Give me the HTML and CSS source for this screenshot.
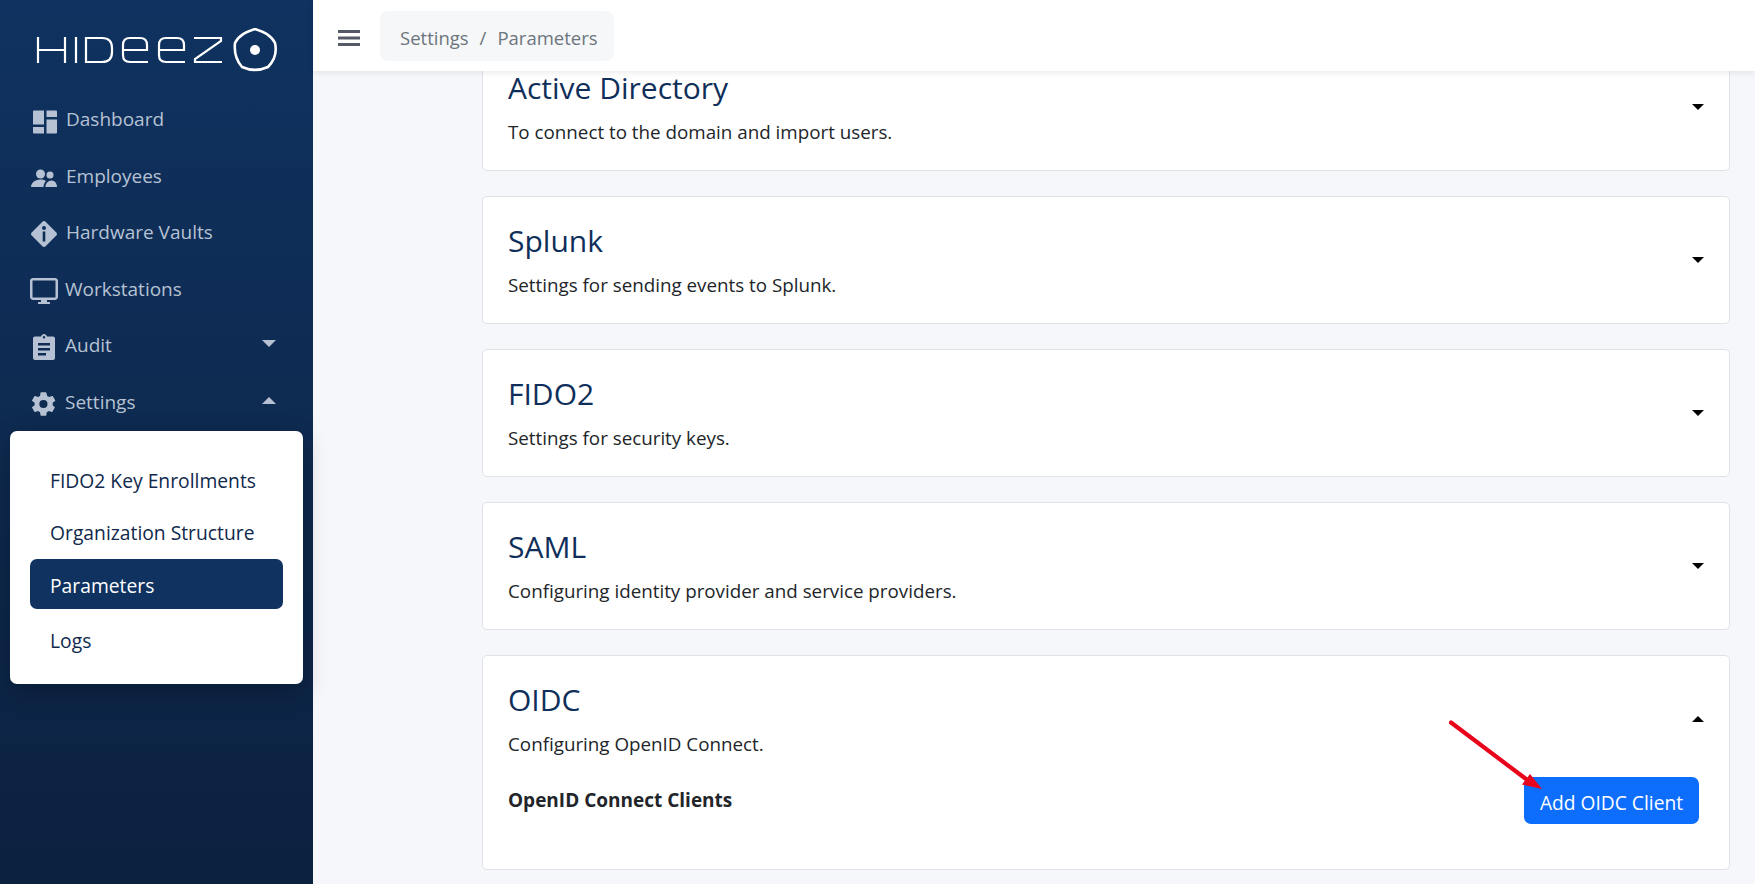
FILE: index.html
```html
<!DOCTYPE html>
<html lang="en">
<head>
<meta charset="utf-8">
<title>Parameters</title>
<link rel="stylesheet" href="styles.css">
</head>
<body>
<div class="app">
  <aside class="sidebar">
    <div class="logo">
      <svg width="250" height="44" viewBox="0 0 250 44" fill="none" stroke="#fff" stroke-width="2.2">
        <path d="M3 9V35M3 22H30M30 9V35"/>
        <path d="M41 9V35"/>
        <path d="M51 10H67Q77 10 77 20V24Q77 34 67 34H51Z"/>
        <path d="M88 22H112V17Q112 10 105 10H95Q88 10 88 17V27Q88 34 95 34H113"/>
        <path d="M124 22H149V17Q149 10 142 10H131Q124 10 124 17V27Q124 34 131 34H150"/>
        <path d="M159 10H186V13L160 31V34H187"/>
        <path d="M220 1C229 4 236 7 240 15C242 24 240 32 233 39C224 43 216 43 207 39C201 32 199 24 200 15C204 7 211 4 220 1Z" stroke-linejoin="round" stroke-width="2.600"/>
        <circle cx="220" cy="22" r="5" fill="#fff" stroke="none"/>
      </svg>
    </div>
    <nav class="nav">
      <a class="nav-item"><span class="nav-icon"><svg viewBox="0 0 28 28"><path d="M3 4.500a1 1 0 0 1 1-1H14V17.500H3zM3 20H14V26.500H4a1 1 0 0 1-1-1zM16.500 3.500H26a1 1 0 0 1 1 1V10H16.500zM16.500 12.500H27V25.500a1 1 0 0 1-1 1H16.500z"/></svg></span>Dashboard</a>
      <a class="nav-item"><span class="nav-icon"><svg viewBox="0 0 28 28"><circle cx="10.500" cy="10" r="4.500"/><circle cx="20" cy="11" r="3.500"/><path d="M1 23c0-4.500 4.500-7.500 9.500-7.500 2.500 0 4.500.7 5.500 1.500-1.500 1.500-2.500 3.500-2.500 6zM15.500 23c0-3.500 2.500-6.500 6-6.500S27 19.500 27 23z"/></svg></span>Employees</a>
      <a class="nav-item"><span class="nav-icon"><svg viewBox="0 0 28 28"><path fill-rule="evenodd" d="M14 1c.6 0 1.200.2 1.600.7l10.700 10.700c.9.900.9 2.300 0 3.200L15.600 26.300c-.9.900-2.300.9-3.200 0L1.700 15.600c-.9-.9-.9-2.300 0-3.200L12.400 1.700C12.800 1.200 13.400 1 14 1zM12.700 11.500h2.600v10h-2.600zM14 6a2 2 0 1 1 0 4 2 2 0 0 1 0-4z"/></svg></span>Hardware Vaults</a>
      <a class="nav-item nav-item-tight"><span class="nav-icon"><svg viewBox="0 0 28 28"><path fill-rule="evenodd" d="M3 1h22c1.500 0 3 1.200 3 3v16c0 1.500-1.500 3-3 3h-8v2h3v2H8v-2h3v-2H3c-1.500 0-3-1.500-3-3V4c0-1.800 1.500-3 3-3zM2.500 3.500v17h23v-17z"/></svg></span>Workstations</a>
      <a class="nav-item nav-item-tight"><span class="nav-icon"><svg viewBox="0 0 28 28"><path fill-rule="evenodd" d="M5 3.500h6C11.500 2 12.700 1 14 1s2.500 1 3 2.500h6c1.100 0 2 .9 2 2V25c0 1.100-.9 2-2 2H5c-1.100 0-2-.9-2-2V5.500c0-1.100.9-2 2-2zM14 3a1.200 1.200 0 1 0 0 2.400A1.200 1.200 0 0 0 14 3zM8 10v2.500h12V10zM8 15v2.500h12V15zM8 20v2.500h8V20z"/></svg></span>Audit<span class="caret caret-down"></span></a>
      <a class="nav-item nav-item-tight"><span class="nav-icon"><svg viewBox="0 0 24 24"><path d="M19.400 13c.1-.3.100-.7.100-1s0-.7-.1-1l2.100-1.600c.2-.2.200-.4.100-.6l-2-3.500c-.1-.2-.4-.3-.6-.2l-2.500 1c-.5-.4-1.100-.7-1.700-1L14 2.400c0-.2-.3-.4-.5-.4h-4c-.2 0-.5.200-.5.400l-.4 2.700c-.6.300-1.200.6-1.700 1l-2.500-1c-.2-.1-.5 0-.6.200l-2 3.500c-.1.200-.1.400.1.600L4 11c-.1.300-.1.700-.1 1s0 .7.100 1l-2.100 1.600c-.2.200-.2.400-.1.600l2 3.500c.1.200.4.300.6.200l2.500-1c.5.400 1.100.7 1.700 1l.4 2.700c0 .2.300.4.500.4h4c.2 0 .5-.2.500-.4l.4-2.700c.6-.3 1.200-.6 1.700-1l2.500 1c.2.100.5 0 .6-.2l2-3.500c.1-.2.100-.4-.1-.6zM11.500 15.500a3.500 3.500 0 1 1 0-7 3.500 3.500 0 0 1 0 7z"/></svg></span>Settings<span class="caret caret-up"></span></a>
    </nav>
    <div class="submenu">
      <a class="sub-item">FIDO2 Key Enrollments</a>
      <a class="sub-item">Organization Structure</a>
      <a class="sub-item sub-active">Parameters</a>
      <a class="sub-item">Logs</a>
    </div>
  </aside>
  <div class="main">
    <header class="topbar">
      <svg class="burger" width="22" height="16" viewBox="0 0 22 16"><path d="M0 0h22v3H0zM0 6.500h22v3H0zM0 13h22v3H0z"/></svg>
      <div class="crumbs">Settings<span class="crumb-sep">/</span>Parameters</div>
    </header>
    <div class="content">
      <section class="card">
        <div class="card-head">
          <div><h2>Active Directory</h2><p>To connect to the domain and import users.</p></div>
          <span class="arrow arrow-down"></span>
        </div>
      </section>
      <section class="card">
        <div class="card-head">
          <div><h2>Splunk</h2><p>Settings for sending events to Splunk.</p></div>
          <span class="arrow arrow-down"></span>
        </div>
      </section>
      <section class="card">
        <div class="card-head">
          <div><h2>FIDO2</h2><p>Settings for security keys.</p></div>
          <span class="arrow arrow-down"></span>
        </div>
      </section>
      <section class="card">
        <div class="card-head">
          <div><h2>SAML</h2><p>Configuring identity provider and service providers.</p></div>
          <span class="arrow arrow-down"></span>
        </div>
      </section>
      <section class="card card-open">
        <div class="card-head">
          <div><h2>OIDC</h2><p>Configuring OpenID Connect.</p></div>
          <span class="arrow arrow-up"></span>
        </div>
        <div class="card-row">
          <strong>OpenID Connect Clients</strong>
          <div class="btn-wrap">
            <button class="btn">Add OIDC Client</button>
            <svg class="pointer" width="100" height="72" viewBox="0 0 100 72"><path d="M2 2.500L77 59" stroke="#e8051c" stroke-width="4.200" stroke-linecap="round" fill="none"/><path d="M93 69L73 64.500L81 54Z" fill="#e8051c"/></svg>
          </div>
        </div>
      </section>
    </div>
  </div>
</div>
</body>
</html>
```
FILE: styles.css
```css
* { box-sizing: border-box; }
html, body { margin: 0; height: 100%; overflow: hidden; }
body {
  font-family: "Open Sans", "Noto Sans", "Liberation Sans", sans-serif;
  background: #f5f7fb;
  color: #212529;
}
.app { display: flex; height: 884px; }

.sidebar {
  width: 313px;
  flex: none;
  background: linear-gradient(180deg, #0f3260 0%, #0e2a50 50%, #0c2140 100%);
  padding-top: 28px;
}
.logo { padding-left: 35px; height: 44px; }
.logo svg { display: block; }
.nav { margin-top: 19px; }
.nav-item {
  display: flex;
  align-items: center;
  height: 56.500px;
  padding-left: 30px;
  padding-right: 37px;
  color: #b6c2d3;
  font-size: 19px;
}
.nav-icon { width: 28px; height: 28px; margin-right: 8px; margin-top: 4px; flex: none; }
.nav-item-tight .nav-icon { margin-right: 7px; }
.nav-icon svg { width: 28px; height: 28px; fill: #b6c2d3; display: block; }
.caret { margin-left: auto; width: 0; height: 0; border-left: 7px solid transparent; border-right: 7px solid transparent; margin-bottom: 3px; }
.caret-down { border-top: 7px solid #b6c2d3; }
.caret-up { border-bottom: 7px solid #b6c2d3; }

.submenu {
  margin: 1px 10px 0;
  height: 253px;
  background: #fff;
  border-radius: 7px;
  padding: 24px 20px;
  box-shadow: 0 8px 24px rgba(0, 0, 0, .25);
  display: flex;
  flex-direction: column;
  gap: 2px;
}
.sub-item {
  height: 50px;
  display: flex;
  align-items: center;
  padding-left: 20px;
  color: #10294c;
  font-size: 19.300px;
  border-radius: 7px;
  flex: none;
}
.sub-active { background: #0f3260; color: #fff; margin-bottom: 4px; padding-top: 2px; }

.main { flex: 1; min-width: 0; display: flex; flex-direction: column; }
.topbar {
  position: relative;
  z-index: 2;
  height: 71px;
  flex: none;
  background: #fff;
  box-shadow: 0 2px 6px rgba(0, 0, 0, .08);
  display: flex;
  align-items: center;
  padding-left: 25px;
}
.burger { fill: #555a66; flex: none; margin-top: 4px; }
.crumbs {
  margin-left: 20px;
  width: 234px;
  height: 50px;
  padding: 3px 0 0 20px;
  display: flex;
  align-items: center;
  background: #f6f7f9;
  border-radius: 8px;
  color: #6c757d;
  font-size: 18.500px;
}
.crumb-sep { padding: 0 11px; }

.content {
  flex: 1;
  min-height: 0;
  margin-top: -28px;
  padding: 0 25px 0 169px;
  display: flex;
  flex-direction: column;
  gap: 25px;
}
.card {
  background: #fff;
  border: 1px solid #dfe3e8;
  border-radius: 5px;
  padding: 25px 25px 0;
  height: 128px;
  flex: none;
}
.card-open { height: 215px; }
.card-head { display: flex; justify-content: space-between; align-items: center; }
h2 {
  margin: 0;
  font-size: 30px;
  font-weight: 400;
  line-height: 38px;
  color: #0f2f5a;
}
p {
  margin: 11px 0 0;
  font-size: 18.800px;
  line-height: 28px;
  color: #212529;
}
.arrow { width: 0; height: 0; border-left: 6px solid transparent; border-right: 6px solid transparent; margin-bottom: 2px; }
.arrow-down { border-top: 6px solid #000; }
.arrow-up { border-bottom: 6px solid #000; }
.card-row {
  display: flex;
  justify-content: space-between;
  align-items: flex-start;
  margin-top: 19px;
  padding-right: 5px;
}
.card-row strong { font-size: 19px; font-weight: 700; line-height: 46px; }
.btn-wrap { position: relative; }
.btn {
  display: block;
  width: 175px;
  height: 47px;
  border: 0;
  padding: 3px 0 0;
  border-radius: 7px;
  background: #0d6efd;
  color: #fff;
  font: inherit;
  font-size: 19.200px;
}
.pointer { position: absolute; left: -75px; top: -57px; }
```
